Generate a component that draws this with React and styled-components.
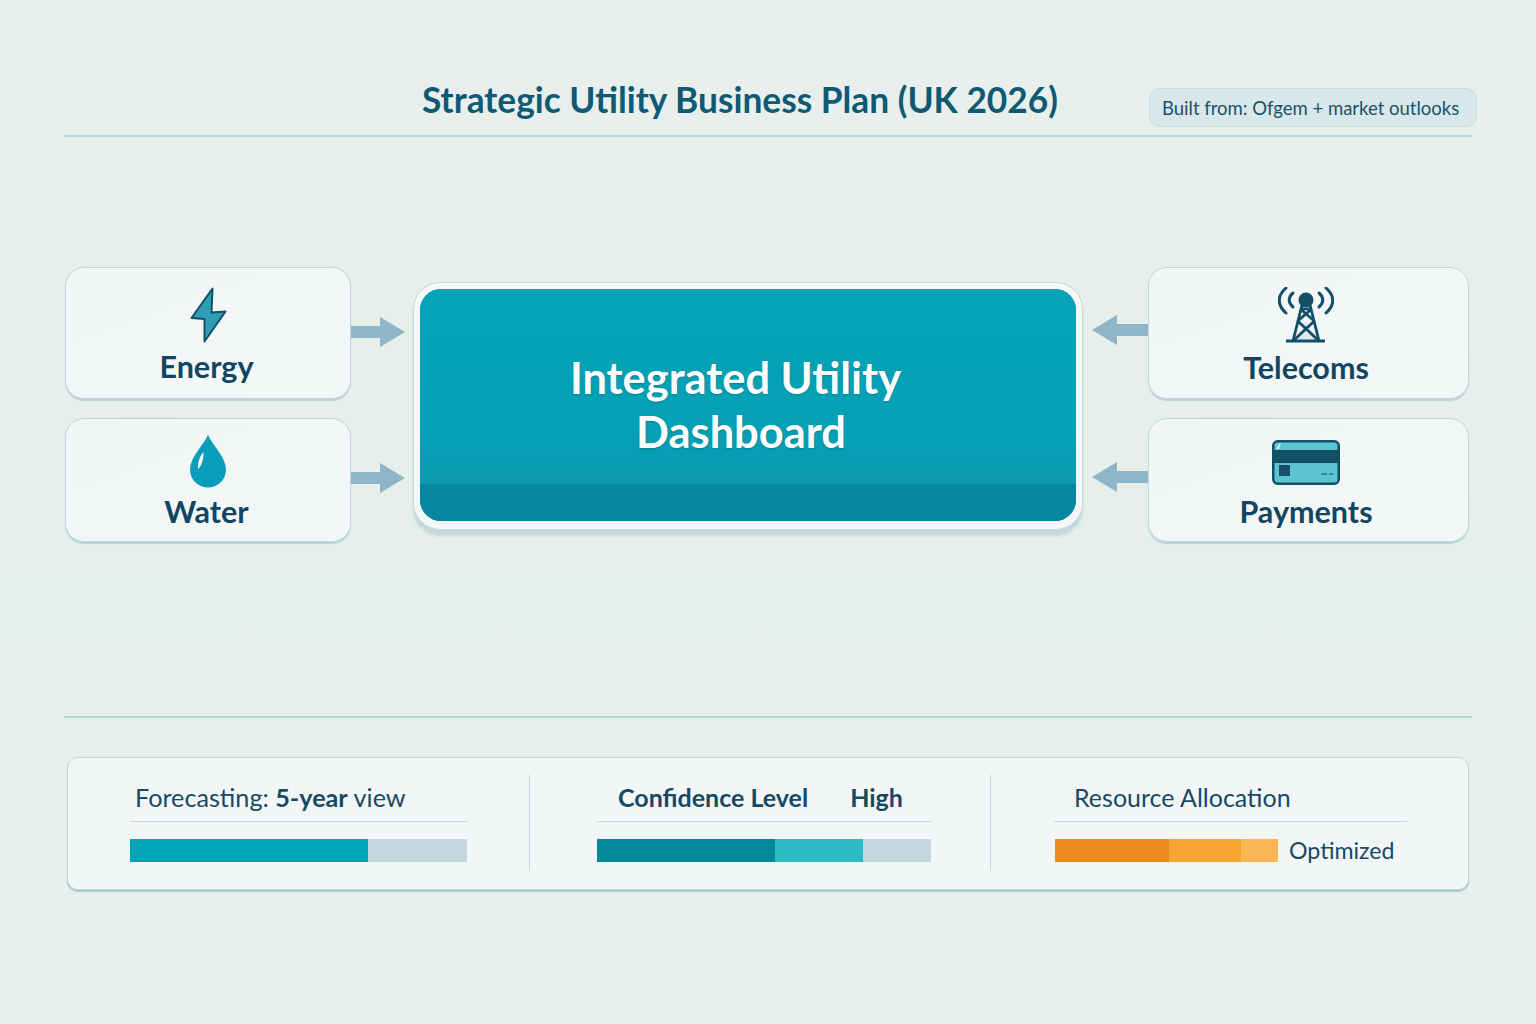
import React from "react";
import styled, { createGlobalStyle } from "styled-components";

const Global = createGlobalStyle`
  html, body { margin: 0; padding: 0; }
  body { background: #e8efeb; font-family: "Lato", "Noto Sans", sans-serif; }
`;

const Page = styled.div`
  width: 1536px;
  height: 1024px;
  box-sizing: border-box;
  padding: 0 64px;
  overflow: hidden;
  background: linear-gradient(180deg, #e8efec 0%, #e7efea 60%, #e9f0ec 100%);
`;

const Header = styled.header`
  height: 137px;
  box-sizing: border-box;
  padding: 80px 0 0 358px;
  border-bottom: 2px solid #b7d6db;
  display: flex;
  align-items: flex-start;
`;

const Title = styled.h1`
  margin: 0;
  font-size: 35.3px;
  line-height: 40px;
  font-weight: 700;
  color: #0e5a74;
  white-space: nowrap;
`;

const Badge = styled.div`
  margin: 8px -5px 0 auto;
  width: 328px;
  height: 39px;
  box-sizing: border-box;
  padding-left: 12px;
  display: flex;
  align-items: center;
  border: 1px solid #c6dfe3;
  border-radius: 11px;
  background: #d8e7ea;
  color: #1a5268;
  font-size: 18.5px;
  white-space: nowrap;
`;

const Diagram = styled.section`
  margin-top: 130px;
  height: 449px;
  padding: 0 3px 0 1px;
  display: flex;
  align-items: flex-start;
  justify-content: space-between;
`;

const Side = styled.div`
  display: flex;
  flex-direction: column;
  gap: 19px;
`;

const Row = styled.div`
  display: flex;
  flex-direction: ${(p) => (p.$reverse ? "row-reverse" : "row")};
  align-items: center;
`;

const Card = styled.div`
  width: ${(p) => p.$w}px;
  height: ${(p) => p.$h}px;
  box-sizing: border-box;
  padding-top: ${(p) => p.$top}px;
  padding-right: ${(p) => p.$nudge}px;
  display: flex;
  flex-direction: column;
  align-items: center;
  background: linear-gradient(160deg, #f2f6f7, #f4f7f7);
  border: 1px solid #bdd7dd;
  border-radius: 19px;
  box-shadow: 0 2px 1px #b9d3da;
`;

const IconSlot = styled.div`
  height: 56px;
  display: flex;
  align-items: center;
  justify-content: center;
`;

const CardLabel = styled.div`
  margin-top: ${(p) => p.$gap}px;
  font-size: 30.5px;
  line-height: 36px;
  font-weight: 700;
  color: #12455f;
`;

const ArrowIcon = styled.svg`
  display: block;
  flex: none;
  margin-top: ${(p) => p.$shift || 0}px;
`;

const Hub = styled.div`
  margin: 15px 1px 0 0;
  width: 670px;
  height: 248px;
  box-sizing: border-box;
  padding: 6px 6px 8px;
  background: #f5f8f8;
  border: 1px solid #c2d9de;
  border-radius: 27px;
  box-shadow: 0 6px 3px #c4d8dd;
`;

const HubFace = styled.div`
  height: 100%;
  border-radius: 21px;
  overflow: hidden;
  display: flex;
  flex-direction: column;
  background: #02a2b6;
`;

const HubBody = styled.div`
  flex: 1;
  box-sizing: border-box;
  padding-top: 61px;
  background: linear-gradient(180deg, #04a3b6 0%, #05a1b5 70%, #0a9ab0 100%);
  color: #fff;
  text-align: center;
  font-size: 43.4px;
  line-height: 54px;
  font-weight: 700;
  text-shadow: 0 1px 2px rgba(0, 70, 90, 0.35);
`;

const HubLine = styled.div`
  padding-right: ${(p) => p.$nudge}px;
`;

const HubFoot = styled.div`
  height: 37px;
  background: #08869f;
`;

const Rule = styled.hr`
  margin: 0;
  border: 0;
  height: 2px;
  background: #b7d6db;
`;

const Panel = styled.section`
  margin: 39px 3px 0;
  width: 1402px;
  height: 133px;
  box-sizing: border-box;
  padding-top: 17px;
  display: grid;
  grid-template-columns: 461px 461px 480px;
  background: #f3f6f7;
  border: 1px solid #bdd7dd;
  border-radius: 11px;
  box-shadow: 0 2px 1px #a9c9d2;
  align-items: start;
`;

const Metric = styled.div`
  height: 96px;
  box-sizing: border-box;
  padding-left: ${(p) => p.$pad}px;
  border-left: ${(p) => (p.$divided ? "1px solid #c6d4d9" : "0")};
`;

const MetricHead = styled.div`
  width: ${(p) => p.$w}px;
  height: 47px;
  box-sizing: border-box;
  padding-left: ${(p) => p.$inset}px;
  padding-top: 7px;
  display: flex;
  gap: ${(p) => p.$gap || 0}px;
  border-bottom: 1px solid #c8d6da;
  color: #164a63;
  font-size: ${(p) => p.$size || 25}px;
  line-height: 30px;
  white-space: nowrap;
`;

const Strong = styled.strong`
  font-weight: 700;
`;

const BarRow = styled.div`
  margin: 17px 0 0 ${(p) => p.$inset || 0}px;
  display: flex;
  align-items: center;
  gap: 11px;
`;

const Bar = styled.div`
  width: ${(p) => p.$w}px;
  height: 23px;
  display: flex;
`;

const Segment = styled.div`
  width: ${(p) => p.$w}px;
  background: ${(p) => p.$c};
`;

const BarNote = styled.div`
  font-size: 23.2px;
  line-height: 23px;
  color: #164a63;
`;

const Bolt = () => (
  <svg width="40" height="56" viewBox="0 0 40 56" aria-hidden="true">
    <path
      d="M25.5 1.5 L4.5 31 L17.5 32 L17.5 54.5 L38.5 24.5 L24.5 25.5 Z"
      fill="#2f9db3"
      stroke="#135067"
      strokeWidth="2"
      strokeLinejoin="round"
    />
  </svg>
);

const DropSvg = styled.svg`
  display: block;
  margin: -2px 0 0 3px;
`;

const Drop = () => (
  <DropSvg width="38" height="54" viewBox="0 0 38 54" aria-hidden="true">
    <path
      d="M19 1 C24 12 37 23 37 35.5 A18 18 0 0 1 1 35.5 C1 23 14 12 19 1 Z"
      fill="#0a9cba"
    />
    <path d="M14.5 18 C11 22 8.5 28 9 35 C12 33 15 25 14.5 18 Z" fill="#f2f8fa" />
  </DropSvg>
);

const Tower = () => (
  <svg width="56" height="56" viewBox="0 0 56 56" fill="none" aria-hidden="true">
    <path d="M28 34 L15 54 H41 Z" fill="#dfeaee" />
    <g stroke="#135067" strokeWidth="3" strokeLinecap="round">
      <path d="M8 1 C-1 9 -1 18 8 26" />
      <path d="M15 6 C10 10 10 16 15 20" />
      <path d="M48 1 C57 9 57 18 48 26" />
      <path d="M41 6 C46 10 46 16 41 20" />
    </g>
    <g stroke="#135067" strokeWidth="2.8">
      <path d="M25 14 L15 54" />
      <path d="M31 14 L41 54" />
      <path d="M22.4 22 H33.6" />
      <path d="M22.4 22 L36.3 34 M33.6 22 L19.7 34" />
      <path d="M19.7 34 L41 54 M36.3 34 L15 54" />
    </g>
    <circle cx="28" cy="13" r="7.5" fill="#135067" />
    <rect x="8" y="52.5" width="39" height="3" fill="#135067" />
  </svg>
);

const PayCard = () => (
  <svg width="68" height="45" viewBox="0 0 68 45" aria-hidden="true">
    <rect x="1.25" y="1.25" width="65.5" height="42.5" rx="4.5" fill="#5cc4cf" stroke="#135067" strokeWidth="2.5" />
    <rect x="2" y="10" width="64" height="13" fill="#135067" />
    <rect x="7" y="25" width="11" height="11" fill="#1a5069" />
    <path d="M4 9 L7 3.5 L9 3.5 L7 9 Z" fill="#c5ecf0" />
    <path d="M49.5 34 H55 M57 34 H61.5" stroke="#2b6c80" strokeWidth="1.4" />
  </svg>
);

const ArrowRight = ({ shift, h = 30, w = 54 }) => (
  <ArrowIcon $shift={shift} width={w} height={h} viewBox={`0 0 ${w} ${h}`} aria-hidden="true">
    <path
      d={`M0 ${h / 2 - 6} H${w - 25} V0 L${w} ${h / 2} L${w - 25} ${h} V${h / 2 + 6} H0 Z`}
      fill="#8fb6c8"
    />
  </ArrowIcon>
);

const ArrowLeft = ({ shift, h = 30, w = 56 }) => (
  <ArrowIcon $shift={shift} width={w} height={h} viewBox={`0 0 ${w} ${h}`} aria-hidden="true">
    <path
      d={`M${w} ${h / 2 - 6} H25 V0 L0 ${h / 2} L25 ${h} V${h / 2 + 6} H${w} Z`}
      fill="#8fb6c8"
    />
  </ArrowIcon>
);

export default function App() {
  return (
    <Page>
      <Global />
      <Header>
        <Title>Strategic Utility Business Plan (UK 2026)</Title>
        <Badge>Built from: Ofgem + market outlooks</Badge>
      </Header>

      <Diagram>
        <Side>
          <Row>
            <Card $w={286} $h={132} $top={19} $nudge={3}>
              <IconSlot><Bolt /></IconSlot>
              <CardLabel $gap={5}>Energy</CardLabel>
            </Card>
            <ArrowRight shift={-2} />
          </Row>
          <Row>
            <Card $w={286} $h={124} $top={15} $nudge={3}>
              <IconSlot><Drop /></IconSlot>
              <CardLabel $gap={3}>Water</CardLabel>
            </Card>
            <ArrowRight shift={-4} />
          </Row>
        </Side>

        <Hub>
          <HubFace>
            <HubBody>
              <HubLine $nudge={25}>Integrated Utility</HubLine>
              <HubLine $nudge={14}>Dashboard</HubLine>
            </HubBody>
            <HubFoot />
          </HubFace>
        </Hub>

        <Side>
          <Row $reverse>
            <Card $w={321} $h={132} $top={19} $nudge={5}>
              <IconSlot><Tower /></IconSlot>
              <CardLabel $gap={6}>Telecoms</CardLabel>
            </Card>
            <ArrowLeft shift={-6} />
          </Row>
          <Row $reverse>
            <Card $w={321} $h={124} $top={15} $nudge={5}>
              <IconSlot><PayCard /></IconSlot>
              <CardLabel $gap={3}>Payments</CardLabel>
            </Card>
            <ArrowLeft shift={-6} />
          </Row>
        </Side>
      </Diagram>

      <Rule />

      <Panel>
        <Metric $pad={62}>
          <MetricHead $w={338} $inset={5} $size={25.2}>
            <span>Forecasting: <Strong>5-year</Strong> view</span>
          </MetricHead>
          <BarRow>
            <Bar $w={337}>
              <Segment $w={238} $c="#02a5b8" />
              <Segment $w={99} $c="#c2d7df" />
            </Bar>
          </BarRow>
        </Metric>
        <Metric $pad={67} $divided>
          <MetricHead $w={335} $inset={21} $gap={42}>
            <Strong>Confidence Level</Strong>
            <Strong>High</Strong>
          </MetricHead>
          <BarRow>
            <Bar $w={334}>
              <Segment $w={178} $c="#04899a" />
              <Segment $w={88} $c="#2cbac4" />
              <Segment $w={68} $c="#c2d7df" />
            </Bar>
          </BarRow>
        </Metric>
        <Metric $pad={63} $divided>
          <MetricHead $w={353} $inset={20}>
            <span>Resource Allocation</span>
          </MetricHead>
          <BarRow $inset={1}>
            <Bar $w={223}>
              <Segment $w={114} $c="#ef8a1d" />
              <Segment $w={72} $c="#f5a533" />
              <Segment $w={37} $c="#f8b752" />
            </Bar>
            <BarNote>Optimized</BarNote>
          </BarRow>
        </Metric>
      </Panel>
    </Page>
  );
}
